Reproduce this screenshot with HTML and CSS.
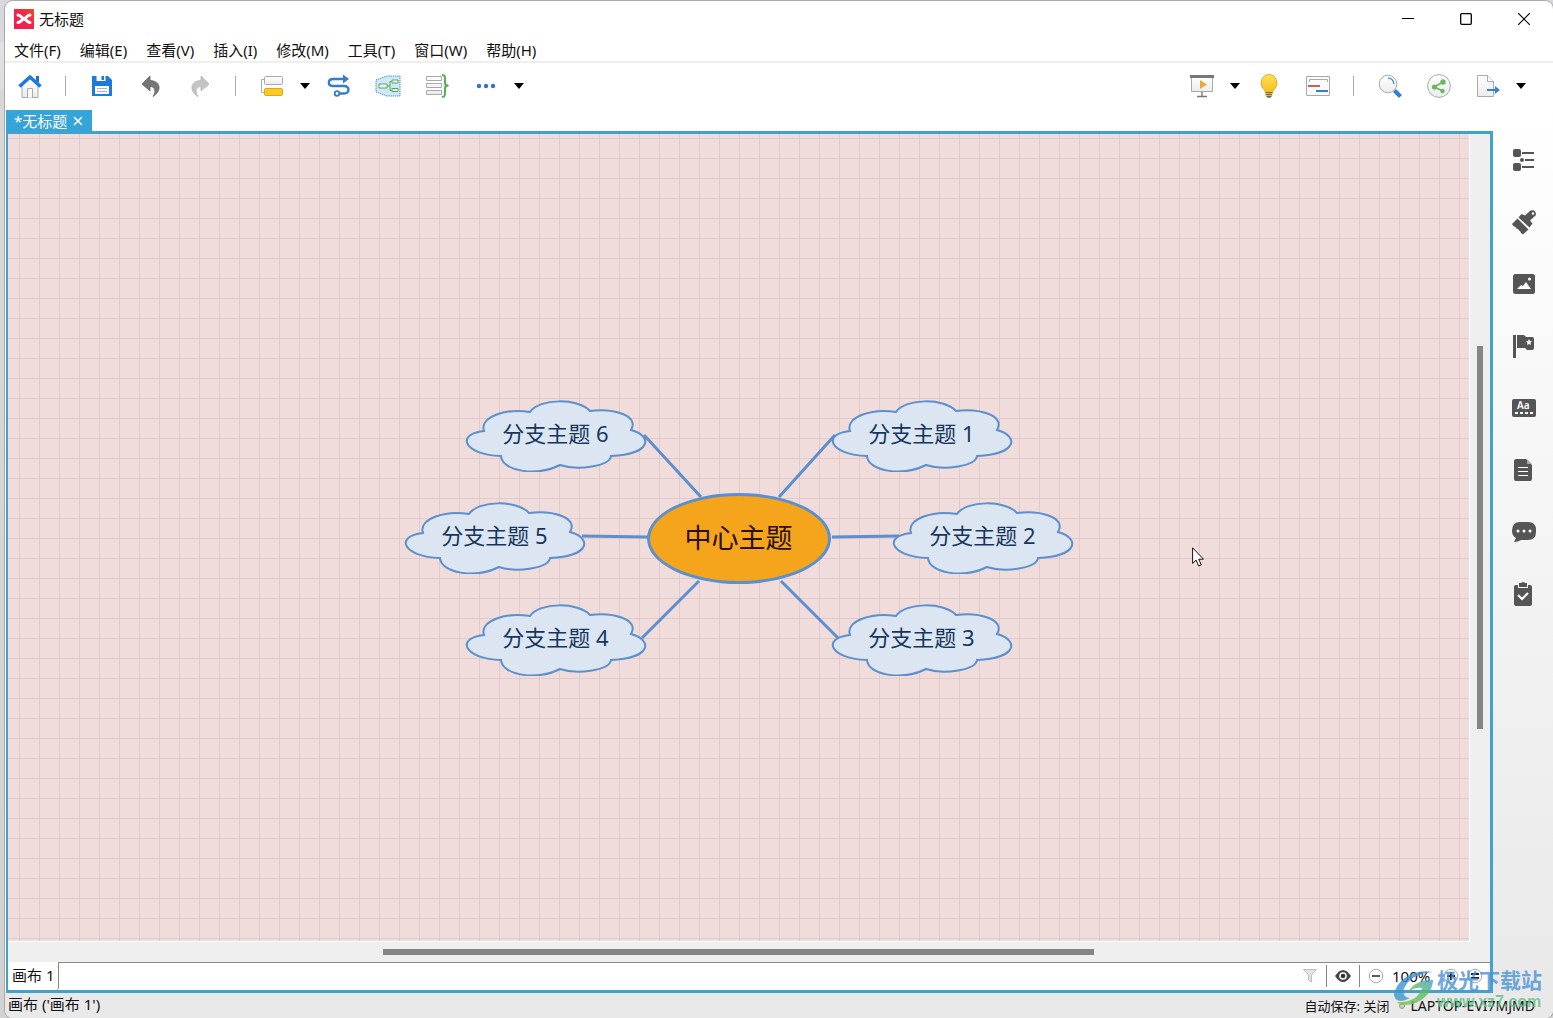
FILE: index.html
```
<!DOCTYPE html>
<html lang="zh-CN">
<head>
<meta charset="utf-8">
<title>无标题</title>
<link rel="stylesheet" href="styles.css">
</head>
<body>
<svg class="defs" aria-hidden="true">
  <defs>
    <linearGradient id="paper" x1="0" y1="0" x2="0" y2="1"><stop offset="0" stop-color="#fff"/><stop offset="1" stop-color="#ececec"/></linearGradient>
    <linearGradient id="gold" x1="0" y1="0" x2="0" y2="1"><stop offset="0" stop-color="#fbe35a"/><stop offset="1" stop-color="#f8bd22"/></linearGradient>
    <linearGradient id="swirl" x1="0" y1="0" x2="0" y2="1"><stop offset="0" stop-color="#3f8fd6"/><stop offset="1" stop-color="#3a9bd0"/></linearGradient>
    <linearGradient id="leaf" x1="0" y1="1" x2="1" y2="0"><stop offset="0" stop-color="#7cc653"/><stop offset="0.6" stop-color="#5cbc62"/><stop offset="1" stop-color="#3f9fd0"/></linearGradient>
    <linearGradient id="logo" x1="0" y1="1" x2="1" y2="0"><stop offset="0" stop-color="#ee1a50"/><stop offset="0.6" stop-color="#f0284a"/><stop offset="1" stop-color="#f04a1c"/></linearGradient>
    <symbol id="cloud" viewBox="0 0 182 72">
      <path d="M19 31C14 17 41 8 65 12C74-2 114-2 125 11C147 8 175 15 166 30C188 36 187 54 146 56C145 66 113 71 95 65C71 77 37 71 36 56C-1 55-10 34 19 31Z"/>
    </symbol>
    <symbol id="caret" viewBox="0 0 10 6"><path d="M0 0h10L5 6z"/></symbol>
  </defs>
</svg>
<div class="window">
  <header class="titlebar">
    <svg class="app-logo" viewBox="0 0 20 20"><rect width="20" height="20" fill="url(#logo)"/><path d="M4 6C6.500 6 8 9.500 10 9.500S13.500 6 16 6M4 13.500C6.500 13.500 8 10 10 10S13.500 13.500 16 13.500" fill="none" stroke="#fff" stroke-width="3" stroke-linecap="round"/></svg>
    <h1>无标题</h1>
    <div class="window-controls">
      <button aria-label="最小化"><svg width="12" height="12"><path d="M0 5.500h12" stroke="#000"/></svg></button>
      <button aria-label="最大化"><svg width="12" height="12"><rect x=".7" y=".7" width="10.600" height="10.600" rx="1" fill="none" stroke="#000" stroke-width="1.300"/></svg></button>
      <button aria-label="关闭"><svg width="12" height="12"><path d="M0 0l12 12M12 0L0 12" stroke="#000" stroke-width="1.200"/></svg></button>
    </div>
  </header>
  <nav class="menubar">
    <button>文件(F)</button><button>编辑(E)</button><button>查看(V)</button><button>插入(I)</button><button>修改(M)</button><button>工具(T)</button><button>窗口(W)</button><button>帮助(H)</button>
  </nav>
  <div class="toolbar">
    <button class="tool" aria-label="主页"><svg viewBox="0 0 24 24"><path d="M4 12v11.500h16V12L12 4z" fill="url(#paper)" stroke="#aaa"/><path d="M9.500 23.500v-9h5v9" fill="#fff" stroke="#aaa"/><path d="M18 2h3v6h-3z" fill="#1c6fd0"/><path d="M1.500 12.500L12 3l10.500 9.500" fill="none" stroke="#2079d8" stroke-width="3.600" stroke-linejoin="round"/></svg></button>
    <span class="separator"></span>
    <button class="tool" aria-label="保存"><svg viewBox="0 0 24 24"><path d="M2 2h16l4 4v16H2z" fill="#1b7bdc"/><path d="M6.500 2h9v5h-9z" fill="#fff"/><path d="M11.500 2h2.500v4h-2.500z" fill="#1b7bdc"/><path d="M5 12h14v8H5z" fill="#fff"/><path d="M7 14.500h10M7 17.500h10" stroke="#a9b4be"/></svg></button>
    <button class="tool" aria-label="撤销"><svg viewBox="0 0 24 24"><path d="M11 2L3 10l8 7v-4.500c5 0 6.500 5 3 10C23 17 22 7 11 6.500z" fill="#777" stroke="#666" stroke-width=".8"/></svg></button>
    <button class="tool" aria-label="重做"><svg viewBox="0 0 24 24"><path d="M13 2l8 8-8 7v-4.500c-5 0-6.500 5-3 10C1 17 2 7 13 6.500z" fill="#c4c4c4" stroke="#b6b6b6" stroke-width=".8"/></svg></button>
    <span class="separator"></span>
    <button class="tool" aria-label="主题"><svg viewBox="0 0 24 24"><path d="M4 5.500H1.500v13H4" fill="none" stroke="#aaa"/><rect x="4.500" y="2.500" width="18" height="8" rx="1" fill="url(#paper)" stroke="#aaa"/><rect x="4.500" y="14.500" width="18" height="7" rx="1" fill="#fccb22" stroke="#dfa623"/></svg></button>
    <button class="more" aria-label="更多主题"><svg viewBox="0 0 10 6"><use href="#caret"/></svg></button>
    <button class="tool" aria-label="联系"><svg viewBox="0 0 24 24"><path d="M17 5H6C.5 5 .5 12 6 12h11c6 0 6 7.500 0 7.500h-5" fill="none" stroke="#347ccc" stroke-width="2.400"/><path d="M16 .5l6 4.500-6 4.500z" fill="#347ccc"/><circle cx="10" cy="19.500" r="2.300" fill="#fff" stroke="#347ccc" stroke-width="1.800"/></svg></button>
    <button class="tool" aria-label="外框"><svg class="wide" viewBox="0 0 26 24"><path d="M1 6L12 2h13v20H12L1 18z" fill="#cfe8f7" stroke="#3780c8" stroke-dasharray="1.200 1"/><path d="M12 12h3M17 7.500h-2v9h2" fill="none" stroke="#5aa65a"/><path d="M4 10h8v4H4zM17 6h6v3h-6zM17 14.500h6v3h-6z" fill="#f5fbf2" stroke="#5aa65a"/></svg></button>
    <button class="tool" aria-label="概要"><svg class="wide" viewBox="0 0 26 24"><path d="M2.500 2.500h15v4h-15zM2.500 9.500h15v4h-15zM2.500 16.500h15v4h-15z" fill="url(#paper)" stroke="#aaa"/><path d="M18 1c3.500 0 3 1 3 8 0 1.500 1 2.500 3.500 2.500C22 11.500 21 12.500 21 14c0 7 .5 9-3 9" fill="none" stroke="#5aad50" stroke-width="2"/></svg></button>
    <button class="tool" aria-label="更多"><svg viewBox="0 0 24 24" fill="#2f74cc"><circle cx="5" cy="12" r="2.200"/><circle cx="12" cy="12" r="2.200"/><circle cx="19" cy="12" r="2.200"/></svg></button>
    <button class="more" aria-label="更多工具"><svg viewBox="0 0 10 6"><use href="#caret"/></svg></button>
    <span class="spacer"></span>
    <button class="tool" aria-label="演示"><svg viewBox="0 0 24 24"><path d="M1.500 3h21v14.500h-21z" fill="url(#paper)" stroke="#aaa"/><path d="M0 1h24v3H0z" fill="#777"/><path d="M10 6l7 4.500-7 4.500z" fill="#eaaa3c"/><path d="M12 18v4M7 22.500h10" stroke="#777" stroke-width="1.400"/></svg></button>
    <button class="more" aria-label="演示选项"><svg viewBox="0 0 10 6"><use href="#caret"/></svg></button>
    <button class="tool" aria-label="头脑风暴"><svg viewBox="0 0 24 24"><path d="M12 .5a8.500 8.500 0 0 0-6 14c2 2 2 3 2.500 4h7c.5-1 .5-2 2.500-4a8.500 8.500 0 0 0-6-14z" fill="url(#gold)" stroke="#e0ab2d"/><path d="M8.500 18h7l-1 5-2.500 1-2.500-1z" fill="#77683c"/><path d="M8 19.500h8M8.500 21.500h7" stroke="#d9bd58"/></svg></button>
    <button class="tool" aria-label="甘特图"><svg viewBox="0 0 24 24"><path d="M.5 2.500h23v19H.5z" fill="#fafafa" stroke="#aaa"/><path d="M3.500 8V5.500h18V8" fill="none" stroke="#aaa"/><path d="M2 12h12" stroke="#c4625b" stroke-width="2"/><path d="M10 17h12" stroke="#3080ce" stroke-width="2"/></svg></button>
    <span class="separator"></span>
    <button class="tool" aria-label="查找"><svg viewBox="0 0 24 24"><path d="M16.500 16.500l6 6" stroke="#317fd0" stroke-width="4"/><circle cx="10" cy="10" r="8.800" fill="url(#paper)" stroke="#aaa"/><path d="M10 4q5 0 6 6" fill="none" stroke="#4b94d8" stroke-width="1.400"/></svg></button>
    <button class="tool" aria-label="分享"><svg viewBox="0 0 24 24"><circle cx="12" cy="12" r="11.400" fill="url(#paper)" stroke="#aaa"/><path d="M16 8l-9 5 9 4" fill="none" stroke="#69b760" stroke-width="1.600"/><g fill="#69b760"><circle cx="16" cy="8" r="2.700"/><circle cx="7.500" cy="13" r="2.600"/><circle cx="15.500" cy="17" r="2.200"/></g></svg></button>
    <button class="tool" aria-label="导出"><svg viewBox="0 0 24 24"><path d="M1.500 1.500h10l6 6v15h-16z" fill="url(#paper)" stroke="#aaa"/><path d="M11.500 1.500v6h6" fill="#fff" stroke="#aaa"/><path d="M11 16h8" stroke="#3282d2" stroke-width="2"/><path d="M19 12l5 4-5 4z" fill="#3282d2"/></svg></button>
    <button class="more" aria-label="导出选项"><svg viewBox="0 0 10 6"><use href="#caret"/></svg></button>
  </div>
  <div class="workspace">
    <main class="main">
      <div class="tabs"><div class="tab"><span>*无标题</span><button aria-label="关闭标签"><svg width="10" height="10"><path d="M1 1l8 8M9 1L1 9" stroke="#fff" stroke-width="1.600"/></svg></button></div></div>
      <section class="editor">
        <div class="canvas">
          <div class="map">
            <svg class="links" viewBox="0 0 670 276"><path d="M240 35L297 97M178 136l66 1M238 238L295 181M431 35L375 97M495 136l-67 1M434 238L377 181"/></svg>
            <div class="topic branch b1"><svg><use href="#cloud"/></svg><span>分支主题 1</span></div>
            <div class="topic branch b2"><svg><use href="#cloud"/></svg><span>分支主题 2</span></div>
            <div class="topic branch b3"><svg><use href="#cloud"/></svg><span>分支主题 3</span></div>
            <div class="topic branch b4"><svg><use href="#cloud"/></svg><span>分支主题 4</span></div>
            <div class="topic branch b5"><svg><use href="#cloud"/></svg><span>分支主题 5</span></div>
            <div class="topic branch b6"><svg><use href="#cloud"/></svg><span>分支主题 6</span></div>
            <div class="topic center">中心主题</div>
            <svg class="cursor" viewBox="0 0 12 20"><path d="M.6.8v15.600l3.500-3.300 2.500 5.800 2.600-1.100-2.500-5.600h4.800z" fill="#fff" stroke="#111"/></svg>
          </div>
        </div>
        <div class="track vertical"><div class="thumb"></div></div>
        <div class="track horizontal"><div class="thumb"></div></div>
        <footer class="sheets">
          <button class="sheet">画布 1</button>
          <div class="view-tools">
            <button aria-label="筛选"><svg viewBox="0 0 16 16"><path d="M1.500 1.500h13L9.500 7v7l-3-2V7z" fill="#e4e4e4" stroke="#bbb"/></svg></button>
            <i></i>
            <button aria-label="显示"><svg viewBox="0 0 16 16"><path d="M0 8q8-12 16 0-8 12-16 0z" fill="#444"/><circle cx="8" cy="8" r="3.800" fill="#fff"/><circle cx="8" cy="8" r="2.300" fill="#333"/></svg></button>
            <i></i>
            <button aria-label="缩小"><svg viewBox="0 0 16 16"><circle cx="8" cy="8" r="6.800" fill="#fff" stroke="#aaa"/><path d="M4 8h8" stroke="#333" stroke-width="1.600"/></svg></button>
            <output>100%</output>
            <button aria-label="放大"><svg viewBox="0 0 16 16"><circle cx="8" cy="8" r="6.800" fill="#fff" stroke="#aaa"/><path d="M4 8h8M8 4v8" stroke="#222" stroke-width="2"/></svg></button>
            <button aria-label="实际大小"><svg viewBox="0 0 16 16"><circle cx="8" cy="8" r="6.800" fill="#fff" stroke="#aaa"/><path d="M4 6h8M4 10h8" stroke="#222" stroke-width="1.800"/></svg></button>
          </div>
        </footer>
      </section>
    </main>
    <aside class="sidebar">
      <button aria-label="大纲"><svg viewBox="0 0 24 24"><rect x="1" y="1" width="8" height="8" rx="2"/><rect x="1" y="15" width="8" height="8" rx="2"/><circle cx="10" cy="12" r="2"/><path d="M10 4h12v2H10zM13 11h9v2h-9zM10 18h12v2H10z"/></svg></button>
      <button aria-label="格式"><svg viewBox="0 0 24 24"><path d="M0 14l5.500-5.500 11 11L11 24.500q-2-1-3-3.500-1 0-2-2-2 0-2.500-2Q1 16.500 0 14z"/><path d="M6.500 7.500l3-3.500 3.500 1.500 5.500-5q5.500-1 5.500 4.500l-6 5.500 2.500 3-3 4z"/><circle cx="21" cy="3.500" r="1.200" fill="#fff"/></svg></button>
      <button aria-label="图片"><svg viewBox="0 0 24 24"><rect x="1" y="2" width="22" height="20" rx="2.500"/><path d="M5 17l4-4 2 1 3-4 5 7zM19 7a1.500 1.500 0 1 1-3 0 1.500 1.500 0 0 1 3 0z" fill="#fff"/></svg></button>
      <button aria-label="图标"><svg viewBox="0 0 24 24"><path d="M1 1h3v23H1zM5 1h7l2 2h6q2 0 2 2v9q0 2-2 2h-5l-2-2H5z"/><path d="M17 5l1 2 2 .3-1.500 1.500.4 2.200-1.900-1-1.900 1 .4-2.200L14 7.300l2-.3z" fill="#fff"/></svg></button>
      <button aria-label="样式"><svg viewBox="0 0 24 24"><rect y="3" width="24" height="18" rx="2"/><path d="M3 17h18" stroke="#fff" stroke-width="2" stroke-dasharray="3 2"/><text x="5" y="13">Aa</text></svg></button>
      <button aria-label="备注"><svg viewBox="0 0 24 24"><path d="M4 1h10l6 6v14q0 2-2 2H4q-2 0-2-2V3q0-2 2-2z"/><path d="M15 1v5h5z" fill="#aaa"/><path d="M6 9.500h10M6 13.500h10M6 17.500h10" stroke="#fff" stroke-width="1.200"/></svg></button>
      <button aria-label="批注"><svg viewBox="0 0 24 24"><path d="M8 2h8q8 0 8 8v2q0 8-8 8H9q-3 2-7 2l2-4q-4-2-4-7 0-9 8-9z"/><g fill="#fff"><circle cx="6" cy="11" r="1.500"/><circle cx="12" cy="11" r="1.500"/><circle cx="18" cy="11" r="1.500"/></g></svg></button>
      <button aria-label="任务"><svg viewBox="0 0 24 24"><path d="M4 3h14q2 0 2 2v17q0 2-2 2H4q-2 0-2-2V5q0-2 2-2z"/><path d="M6 2h10v4H6z" fill="#fff"/><path d="M7 1h2q2-2 4 0h2v4H7z"/><path d="M6 13l4 4 6-6" fill="none" stroke="#fff" stroke-width="2"/></svg></button>
    </aside>
  </div>
  <footer class="status"><span class="path">画布 ('画布 1')</span><span class="autosave">自动保存: 关闭</span><span class="dot"></span><span class="host">LAPTOP-EVI7MJMD</span></footer>
  <div class="watermark">
    <svg viewBox="0 0 44 44"><path d="M1 28C3 14 20 1 40 5C27 6 17 11 13 18C8 25 11 31 17 31Q3 38 1 28Z" fill="url(#swirl)"/><path d="M16 24C20 16 30 13 40 13C40 25 28 38 12 38Q6 38 4 35C18 36 26 30 29 21Q23 20 16 24Z" fill="url(#leaf)"/></svg>
    <div><strong>极光下载站</strong><b>www.xz7.com</b></div>
  </div>
</div>
</body>
</html>
```
FILE: styles.css
```
* { box-sizing: border-box; }
body {
  margin: 0;
  height: 100vh;
  padding: 1px 0 0 5px;
  background: linear-gradient(#d6d9de 42px, #e4e2e2 42px, #dedede 88px, #d8d8d8 90px, #d2d2d2);
  font: 15px/20px "Noto Sans", "Noto Sans CJK SC", sans-serif;
  color: #111;
  overflow: hidden;
}
button { border: 0; padding: 0; background: none; font: inherit; color: inherit; display: grid; place-items: center; }
svg { display: block; }
.defs { position: absolute; width: 0; height: 0; }
.window {
  position: relative;
  height: 100%;
  display: flex;
  flex-direction: column;
  background: #fff;
  border-radius: 8px;
  box-shadow: 0 0 0 1px #aaa;
  overflow: hidden;
}
.titlebar { display: flex; align-items: center; height: 36px; padding-left: 9px; }
.app-logo { width: 20px; height: 20px; margin-right: 5px; }
.titlebar h1 { margin: 0; font-size: 15px; font-weight: 400; }
.window-controls { display: flex; margin-left: auto; height: 100%; }
.window-controls button { width: 58px; }
.menubar { display: flex; gap: 19px; height: 26px; padding: 2px 0 0 9px; border-bottom: 2px solid #efefef; }
.toolbar { display: flex; align-items: center; height: 46px; padding-right: 23px; }
.tool { width: 49px; height: 40px; flex: none; }
.tool svg { width: 24px; height: 24px; }
.tool svg.wide { width: 26px; }
.more { width: 18px; height: 40px; flex: none; }
.more svg { width: 10px; height: 6px; }
.separator { width: 23px; height: 20px; background: linear-gradient(#aaa, #aaa) center / 1px 100% no-repeat; }
.spacer { flex: 1; }
.workspace { display: flex; flex: 1; min-height: 0; }
.main { display: flex; flex-direction: column; flex: 1; min-width: 0; padding: 1px 0 0 1px; }
.tabs { display: flex; height: 21px; }
.tab { display: flex; align-items: center; gap: 6px; padding: 0 9px 0 8px; background: #35a4d8; color: #fff; }
.editor {
  flex: 1;
  min-height: 0;
  display: grid;
  grid-template: minmax(0, 1fr) 21px 28px / minmax(0, 1fr) 21px;
  border: 3px solid #42a2cc;
  border-left-width: 2px;
  background: #efefef;
}
.canvas {
  display: grid;
  place-items: center;
  overflow: hidden;
  box-shadow: 1px 1px 0 #fff;
  background:
    linear-gradient(#e0cacb 1px, transparent 1px) 0 4px / 20px 20px,
    linear-gradient(90deg, #e0cacb 1px, transparent 1px) 11px 0 / 20px 20px,
    #f1dcdc;
}
.map { position: relative; width: 670px; height: 276px; }
.links { position: absolute; inset: 0; fill: none; stroke: #5b8fcd; stroke-width: 3; }
.topic { position: absolute; display: grid; place-items: center; }
.branch { width: 182px; height: 72px; font-size: 22px; line-height: 28px; color: #17365d; }
.branch svg { grid-area: 1 / 1; width: 182px; height: 72px; fill: #dce6f2; stroke: #5b8fcd; stroke-width: 2; }
.branch span { grid-area: 1 / 1; padding-bottom: 6px; }
.b1 { left: 427px; top: 0; }
.b2 { left: 488px; top: 102px; }
.b3 { left: 427px; top: 204px; }
.b4 { left: 61px; top: 204px; }
.b5 { left: 0; top: 102px; }
.b6 { left: 61px; top: 0; }
.center {
  left: 243px;
  top: 93px;
  width: 184px;
  height: 91px;
  border: 3px solid #5b8fcd;
  border-radius: 50%;
  background: #f5a51b;
  font-size: 27px;
  line-height: 36px;
  color: #2a1010;
}
.cursor { position: absolute; left: 788px; top: 147px; width: 12px; height: 20px; }
.track { display: grid; place-items: center; }
.vertical { grid-template-rows: 212fr 383fr 212fr; }
.vertical .thumb { grid-row: 2; width: 6px; height: 100%; background: #858585; }
.horizontal { grid-row: 2; grid-template-columns: 375fr 710fr 375fr; }
.horizontal .thumb { grid-column: 2; width: 100%; height: 6px; background: #858585; }
.sheets { grid-column: 1 / 3; display: flex; background: #fff; }
.sheet { padding: 0 4px 2px; border-right: 1px solid #888; border-bottom-right-radius: 3px; }
.view-tools { flex: 1; display: flex; align-items: center; justify-content: flex-end; gap: 8px; padding: 0 7px 2px 0; border-top: 1px solid #888; }
.view-tools svg { width: 16px; height: 16px; }
.view-tools i { width: 1px; height: 22px; background: #888; }
.view-tools output { width: 43px; }
.sidebar { width: 60px; padding: 20px 0 0 2px; background: linear-gradient(#fff, #e9e9e9); }
.sidebar button { width: 100%; height: 62px; }
.sidebar svg { width: 24px; height: 24px; fill: #555; }
.sidebar text { font: 600 10px "Noto Sans", sans-serif; fill: #fff; }
.status { display: flex; align-items: center; height: 25px; padding: 0 18px 0 3px; background: #e9e9e9; }
.path { margin-right: auto; padding-bottom: 4px; }
.autosave { font-size: 13px; }
.dot { width: 6px; height: 6px; margin: 0 5px 0 10px; border-radius: 50%; border: 1px solid #999; background: #d8cfae; }
.host { font-size: 14px; }
.watermark { position: absolute; right: 11px; bottom: 7px; display: flex; opacity: 0.8; pointer-events: none; }
.watermark svg { width: 44px; height: 44px; }
.watermark div { display: flex; flex-direction: column; }
.watermark strong { font-size: 21px; line-height: 26px; color: #4b93d6; }
.watermark b { font: 700 16px/18px "Liberation Sans", sans-serif; color: #5fc08a; }
```
